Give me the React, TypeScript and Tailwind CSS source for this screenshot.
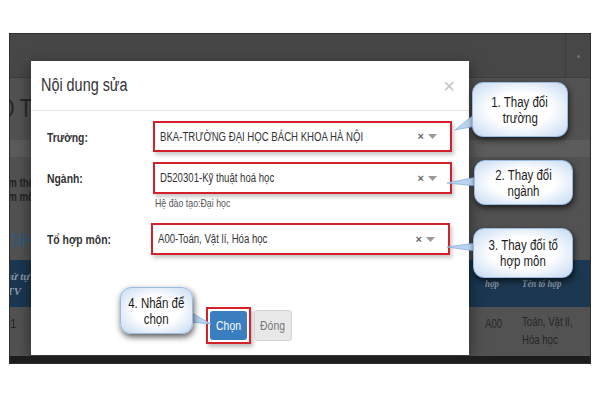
import type { ReactNode } from "react";

// narrow text: the screenshot is squeezed sideways, so text is scaled on x
const Sq = ({ children, className = "" }: { children: ReactNode; className?: string }) => (
    <span className={`inline-block origin-left scale-x-80 whitespace-nowrap ${className}`}>{children}</span>
);

const Caret = () => (
    <svg width="9" height="5" viewBox="0 0 9 5" className="ml-[4px]">
        <path d="M0 0 L9 0 L4.5 5 Z" fill="#9a9a9a" />
    </svg>
);

const SelectBox = ({ value, className = "" }: { value: string; className?: string }) => (
    <div className={`flex items-center w-[299px] border-2 border-[#d3202b] bg-white pl-[5px] pr-[13px] shadow-[2px_3px_4px_rgba(0,0,0,0.22)] ${className}`}>
        <Sq className="text-[12px] text-[#333]">{value}</Sq>
        <span className="ml-auto text-[11px] font-bold leading-none text-[#666]">×</span>
        <Caret />
    </div>
);

const Callout = ({ className, lines }: { className: string; lines: string[] }) => (
    <div
        className={`absolute flex flex-col items-center justify-center rounded-[11px] border border-[#9cbbe3] bg-[radial-gradient(ellipse_at_center,#ffffff_45%,#c4d9f2_100%)] shadow-[1px_3px_6px_rgba(0,0,0,0.65)] ${className}`}
    >
        {lines.map((l) => (
            <span key={l} className="inline-block origin-center scale-x-[0.82] whitespace-nowrap text-[14px] leading-[16px] text-[#1c1c1c]">
                {l}
            </span>
        ))}
    </div>
);

export default function App() {
    return (
        <div className="w-[600px] h-[400px] bg-white pt-[34px] pl-[10px] font-['Liberation_Sans',Arial,sans-serif]">
            <div className="relative w-[580px] h-[329px] overflow-hidden bg-[#525252] border-b-[7px] border-[#1d1d1d] shadow-[0_0_0_1px_#2e2e2e]">
                {/* dimmed page behind the dialog */}
                <div className="flex h-[44px] justify-end border-b border-[#3f3f3f] bg-[#474747]">
                    <div className="flex w-[25px] items-center justify-center border-l border-[#3c3c3c] pt-[2px]">
                        <span className="h-[3px] w-[3px] rounded-full bg-[#6f6f6f]" />
                    </div>
                </div>
                <div className="flex h-[62px] w-[21px] items-center overflow-hidden">
                    <span className="-ml-[11px] text-[25px] text-[#262626]">
                        <Sq>O TIN</Sq>
                    </span>
                </div>
                <div className="h-[17px] bg-[#5c5c5c]" />
                <div className="flex h-[103px] w-[21px] flex-col overflow-hidden">
                    <div className="mt-[19px] -ml-[7px] text-[12px] font-bold leading-[14px] text-[#232323]">
                        <Sq>em thông tin</Sq>
                        <br />
                        <Sq>em môn</Sq>
                    </div>
                    <span className="mt-[24px] ml-[2px] text-[21px] leading-[24px] text-[#2d5b82]">
                        <Sq className="scale-x-[0.7]">NH</Sq>
                    </span>
                </div>
                <div className="flex h-[47px] items-center bg-[#1b3751] font-['Liberation_Serif',serif] text-[11px] font-bold italic text-[#8b99a7]">
                    <div className="w-[21px] overflow-hidden">
                        <div className="-ml-[14px] w-[36px] text-center leading-[15px]">
                            Thứ tự
                            <br />
                            TV
                        </div>
                    </div>
                    <div className="ml-auto w-[37px]">
                        <Sq>hợp</Sq>
                    </div>
                    <div className="w-[68px]">
                        <Sq>Tên tổ hợp</Sq>
                    </div>
                </div>
                <div className="flex pt-[7px] text-[12px] leading-[18px] text-[#262626]">
                    <div className="pt-[1px]">1</div>
                    <div className="ml-auto w-[37px] pt-[1px]">
                        <Sq>A00</Sq>
                    </div>
                    <div className="w-[68px] -mt-[1px]">
                        <Sq>Toán, Vật lí,</Sq>
                        <br />
                        <Sq>Hóa học</Sq>
                    </div>
                </div>

                {/* dialog */}
                <div className="absolute left-[21px] top-[27px] h-[294px] w-[438px] bg-white shadow-[0_5px_15px_rgba(0,0,0,0.5)]">
                    <div className="flex h-[50px] items-center border-b border-[#e5e5e5] pl-[10px] pr-[14px]">
                        <Sq className="text-[18px] text-[#333]">Nội dung sửa</Sq>
                        <span className="ml-auto text-[20px] leading-none text-[#c2c2c2]">×</span>
                    </div>
                    <div className="px-[16px] pt-[10px]">
                        <div className="flex h-[31px] items-center">
                            <div className="w-[106px]">
                                <Sq className="text-[13px] font-bold text-[#333]">Trường:</Sq>
                            </div>
                            <SelectBox value="BKA-TRƯỜNG ĐẠI HỌC BÁCH KHOA HÀ NỘI" className="h-[31px]" />
                        </div>
                        <div className="mt-[10px] flex h-[32px] items-center">
                            <div className="w-[106px]">
                                <Sq className="text-[13px] font-bold text-[#333]">Ngành:</Sq>
                            </div>
                            <SelectBox value="D520301-Kỹ thuật hoá học" className="h-[32px]" />
                        </div>
                        <div className="pl-[108px] pt-[2px] text-[11px] leading-[14px] text-[#555]">
                            <Sq>Hệ đào tạo:Đại học</Sq>
                        </div>
                        <div className="mt-[13px] flex h-[32px] items-center">
                            <div className="w-[104px]">
                                <Sq className="text-[13px] font-bold text-[#333]">Tổ hợp môn:</Sq>
                            </div>
                            <SelectBox value="A00-Toán, Vật lí, Hóa học" className="h-[32px] -mr-[2px]" />
                        </div>
                    </div>
                    <div className="mt-[52px] flex items-center pl-[175px]">
                        <div className="h-[37px] w-[45px] border-2 border-[#d3202b] p-[2px] shadow-[2px_3px_4px_rgba(0,0,0,0.25)]">
                            <div className="flex h-full w-full items-center justify-center rounded-[3px] bg-[#3a7ec0] text-[13px] text-white">
                                <span className="inline-block origin-center scale-x-80">Chọn</span>
                            </div>
                        </div>
                        <div className="ml-[3px] flex h-[31px] w-[38px] items-center justify-center rounded-[3px] border border-[#d4d4d4] bg-[#e8e8e8] text-[13px] text-[#777]">
                            <span className="inline-block origin-center scale-x-80">Đóng</span>
                        </div>
                    </div>
                </div>

                {/* callout pointers */}
                <svg className="pointer-events-none absolute left-0 top-0" width="580" height="322">
                    <g fill="#bad3f1" stroke="#8cb0dd" strokeWidth="0.8">
                        <polygon points="466,79 466,92 445,96" />
                        <polygon points="467,143 467,152 437,149" />
                        <polygon points="466,209 466,217 437,213" />
                        <polygon points="180,278 180,288 201,290" />
                    </g>
                </svg>

                <Callout className="left-[462px] top-[48px] h-[55px] w-[96px]" lines={["1. Thay đổi", "trường"]} />
                <Callout className="left-[464px] top-[126px] h-[45px] w-[99px]" lines={["2. Thay đổi", "ngành"]} />
                <Callout className="left-[463px] top-[194px] h-[50px] w-[100px]" lines={["3. Thay đổi tổ", "hợp môn"]} />
                <Callout className="left-[110px] top-[253px] h-[47px] w-[73px]" lines={["4. Nhấn để", "chọn"]} />
            </div>
        </div>
    );
}
